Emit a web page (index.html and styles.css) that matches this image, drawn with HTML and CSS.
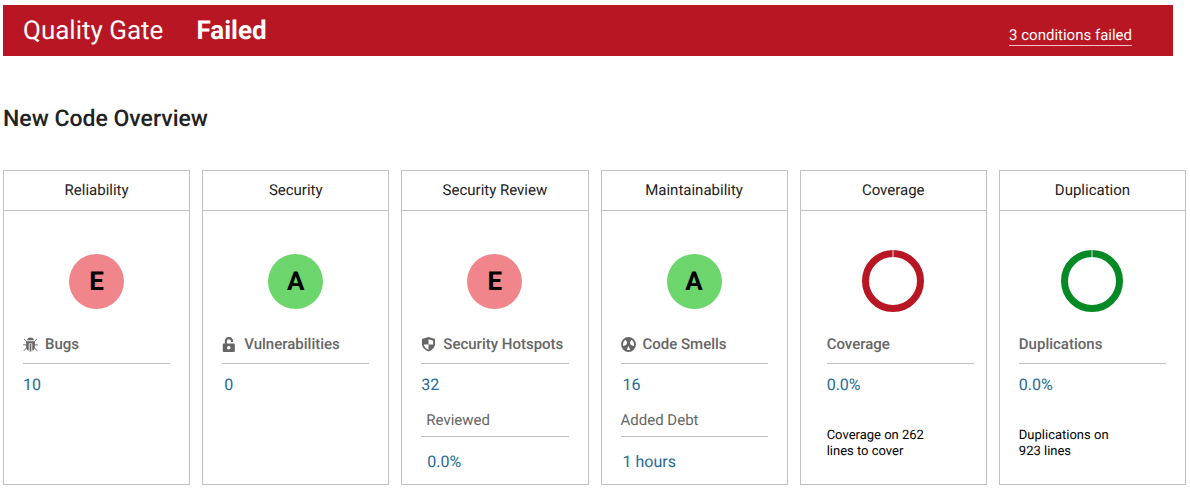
FILE: index.html
```html
<!DOCTYPE html>
<html lang="en">
<head>
<meta charset="utf-8">
<title>Quality Gate</title>
<link rel="stylesheet" href="styles.css">
</head>
<body>
<header class="banner">
  <span class="banner-title">Quality Gate</span>
  <strong class="banner-status">Failed</strong>
  <a class="banner-link" href="#conditions">3 conditions failed</a>
</header>
<main>
  <h1 class="heading">New Code Overview</h1>
  <div class="cards" id="conditions">
    <section class="card">
      <h2 class="card-title">Reliability</h2>
      <div class="card-body">
        <div class="visual"><span class="rating rating-e">E</span></div>
        <h3 class="label"><svg class="icon" viewBox="0 0 16 16" aria-hidden="true"><path d="M4.500 3.400a3.500 3 0 0 1 7 0z"/><path d="M3.400 4.400h9.200v7.600L11 14.500H9.900V7H6.100v7.500H5L3.400 12z"/><path d="M7.100 7.500h1.800V15.500H7.100z"/><path class="stroke" d="M1 2 4.200 5M15 2 11.800 5M.2 8.400h4M15.800 8.400h-4M.8 14.800l3.500-3.800M15.200 14.800l-3.500-3.800"/></svg>Bugs</h3>
        <a class="value" href="#bugs">10</a>
      </div>
    </section>
    <section class="card">
      <h2 class="card-title">Security</h2>
      <div class="card-body">
        <div class="visual"><span class="rating rating-a">A</span></div>
        <h3 class="label"><svg class="icon" viewBox="0 0 16 16" aria-hidden="true"><path fill-rule="evenodd" d="M2 7h1V4.500a4.400 4.400 0 0 1 8.800-.5v1.200H9.600V4.500a2.200 2.200 0 0 0-4.400 0V7H12.500q1.200 0 1.200 1.200v6.600q0 1.200-1.200 1.200h-10.500q-1.200 0-1.200-1.200V8.200Q.8 7 2 7zM7.200 9.600a1.900 1.900 0 1 0 .1 3.800 1.900 1.900 0 0 0-.1-3.800z"/></svg>Vulnerabilities</h3>
        <a class="value value-inset" href="#vulnerabilities">0</a>
      </div>
    </section>
    <section class="card">
      <h2 class="card-title">Security Review</h2>
      <div class="card-body">
        <div class="visual"><span class="rating rating-e">E</span></div>
        <h3 class="label"><svg class="icon" viewBox="0 0 16 16" aria-hidden="true"><path fill-rule="evenodd" d="M8 0l7 2v5c0 4-2.500 6.500-7 8.500C3.500 13.500 1 11 1 7V2zM8 2.500V8H3c.3 2.500 2 4.200 5 5.500V8h5V4z"/></svg>Security Hotspots</h3>
        <a class="value" href="#hotspots">32</a>
        <h3 class="label label-sub label-inset">Reviewed</h3>
        <a class="value value-sub value-deep" href="#reviewed">0.0%</a>
      </div>
    </section>
    <section class="card">
      <h2 class="card-title">Maintainability</h2>
      <div class="card-body">
        <div class="visual"><span class="rating rating-a">A</span></div>
        <h3 class="label"><svg class="icon" viewBox="0 0 16 16" aria-hidden="true"><circle class="ring-stroke" cx="8" cy="8" r="6.900"/><circle cx="8" cy="8" r="2.100"/><path d="M4.400 1h7.200L9.400 6.500H6.600zM.8 10.500 6.300 8l1.400 2L5.500 15.200zM15.200 10.500 9.700 8l-1.400 2L10.500 15.200z"/></svg>Code Smells</h3>
        <a class="value value-inset" href="#smells">16</a>
        <h3 class="label label-sub">Added Debt</h3>
        <a class="value value-sub value-inset" href="#debt">1 hours</a>
      </div>
    </section>
    <section class="card">
      <h2 class="card-title">Coverage</h2>
      <div class="card-body card-body-shifted">
        <div class="visual"><svg class="donut donut-red" viewBox="0 0 62 62" role="img" aria-label="0.0% coverage"><circle cx="31" cy="31" r="27.500"/><path d="M31 0v7"/></svg></div>
        <h3 class="label">Coverage</h3>
        <a class="value" href="#coverage">0.0%</a>
        <p class="note">Coverage on 262 lines to cover</p>
      </div>
    </section>
    <section class="card">
      <h2 class="card-title">Duplication</h2>
      <div class="card-body">
        <div class="visual"><svg class="donut donut-green" viewBox="0 0 62 62" role="img" aria-label="0.0% duplication"><circle cx="31" cy="31" r="27.500"/><path d="M31 0v7"/></svg></div>
        <h3 class="label">Duplications</h3>
        <a class="value" href="#duplications">0.0%</a>
        <p class="note">Duplications on 923 lines</p>
      </div>
    </section>
  </div>
</main>
</body>
</html>
```
FILE: styles.css
```css
* { box-sizing: border-box; }
body {
  margin: 0;
  padding: 5px 4px 4px 3px;
  background: #fff;
  color: #222;
  font-family: Roboto, "Liberation Sans", sans-serif;
  font-size: 16px;
  text-rendering: geometricPrecision;
}
h1, h2, h3, p { margin: 0; }
a { text-decoration: none; }

.banner {
  display: flex;
  align-items: center;
  margin-right: 13px;
  padding: 10px 41px 9px 20px;
  background: #b81623;
  color: #fff;
  font-size: 26px;
  line-height: 32px;
}
.banner-status { margin-left: 33px; font-weight: 700; }
.banner-link {
  margin: 8px 0 0 auto;
  border-bottom: 1px solid #f0c4c8;
  color: #fff;
  font-size: 15px;
  line-height: 20px;
}
.heading {
  margin: 47px 0 35px;
  font-size: 23px;
  font-weight: 500;
  line-height: 32px;
}
.cards {
  display: grid;
  grid-template-columns: repeat(6, minmax(0, 1fr));
  gap: 12px;
}
.card { border: 1px solid #c2c2c2; }
.card-title {
  padding: 7px 0 8px;
  border-bottom: 1px solid #c2c2c2;
  font-size: 15px;
  font-weight: 400;
  line-height: 24px;
  text-align: center;
}
.card-body {
  display: flex;
  flex-direction: column;
  padding: 39px 19px 10px;
}
.card-body-shifted { padding-left: 26px; padding-right: 12px; }
.visual {
  display: flex;
  align-items: center;
  justify-content: center;
  height: 62px;
  margin-bottom: 20px;
}
.card-body-shifted .visual { margin-left: -14px; }
.rating {
  width: 55px;
  height: 55px;
  border-radius: 50%;
  color: #000;
  font-size: 26px;
  font-weight: 700;
  line-height: 57px;
  text-align: center;
}
.rating-e { background: #f0868c; }
.rating-a { background: #6cd66c; }
.donut { width: 62px; height: 62px; fill: none; }
.donut circle { stroke-width: 7; }
.donut path { stroke: #ddd; stroke-width: 1; }
.donut-red { stroke: #b81623; }
.donut-green { stroke: #048a24; }
.label {
  display: flex;
  align-items: center;
  gap: 7px;
  padding-bottom: 7px;
  border-bottom: 1px solid #c2c2c2;
  color: #666;
  font-size: 15px;
  font-weight: 500;
  line-height: 24px;
  white-space: nowrap;
}
.label-sub { margin-top: 11px; padding-bottom: 4px; font-weight: 400; }
.label-inset { padding-left: 5px; }
.icon { width: 15px; height: 15px; fill: #666; }
.stroke { fill: none; stroke: #666; stroke-width: 1; }
.ring-stroke { fill: none; stroke: #666; stroke-width: 2; }
.value {
  align-self: flex-start;
  margin-top: 9px;
  color: #236a97;
  line-height: 24px;
}
.value-sub { margin-top: 13px; }
.value-inset { margin-left: 2px; }
.value-deep { margin-left: 6px; }
.note {
  max-width: 110px;
  margin-top: 31px;
  color: #000;
  font-size: 13px;
  line-height: 16px;
}
```
